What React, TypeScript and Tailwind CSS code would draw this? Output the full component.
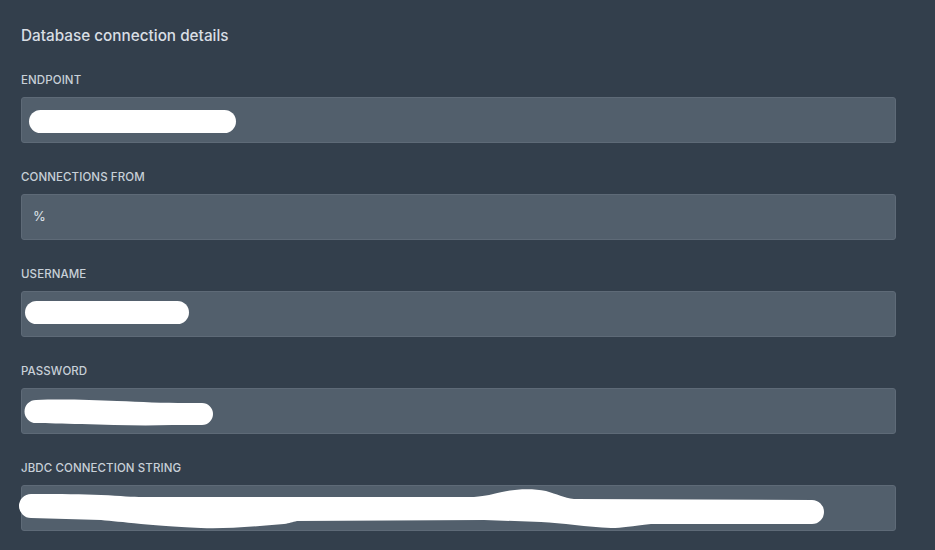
import React from "react"

// white marker strokes hiding the secret values, drawn in the field's own coordinates
function Redaction({ d }: { d: string }) {
    return (
        <svg className="absolute inset-0 overflow-visible" width="875" height="46" viewBox="0 0 875 46">
            <path d={d} fill="#ffffff" />
        </svg>
    )
}

const passwordBlob =
    "M14 11 C40 10 70 11 95 12 C120 13 140 14 165 14 L180 14 A11 11 0 0 1 180 36 L150 36 C120 37 90 36 60 35 C40 35 25 34 14 34 A11.5 11.5 0 0 1 14 11 Z"

const jdbcBlob =
    "M9 8 C40 8 60 8 79 9 C100 10 110 11 121 11 L452 11 C465 10 470 8 480 6 C492 3 510 2 524 5 C535 8 542 12 552 13 L790 14 A12 12 0 0 1 790 38 L629 38 C610 40 600 42 589 42 C565 41 540 37 519 36 L462 34 L275 35 C270 36 268 37 262 38 C230 41 200 43 179 42 C150 41 135 39 119 38 C100 36 90 35 79 34 L9 32 A12 12 0 0 1 9 8 Z"

interface FieldConfig {
    label: string
    value?: string
    blob?: "pill" | "path"
    pillLeft?: number
    pillTop?: number
    pillWidth?: number
    path?: string
}

const fields: FieldConfig[] = [
    { label: "ENDPOINT", blob: "pill", pillLeft: 7, pillTop: 12, pillWidth: 207 },
    { label: "CONNECTIONS FROM", value: "%" },
    { label: "USERNAME", blob: "pill", pillLeft: 3, pillTop: 9, pillWidth: 164 },
    { label: "PASSWORD", blob: "path", path: passwordBlob },
    { label: "JBDC CONNECTION STRING", blob: "path", path: jdbcBlob },
]

export default function App() {
    return (
        <div
            className="min-h-[550px] w-full bg-[#333f4c] pt-[26px] pl-[21px]"
            style={{ fontFamily: "Inter, 'Noto Sans', sans-serif" }}
        >
            <h2 className="text-[15.3px] leading-5 font-medium text-[#d9dee4]">Database connection details</h2>
            <div className="mt-[26px] flex w-[875px] flex-col gap-[26px]">
                {fields.map((field) => (
                    <div key={field.label} className="flex flex-col gap-[9px]">
                        <label className="text-[11.5px] leading-4 font-medium tracking-[0.1px] text-[#c8d0d8]">{field.label}</label>
                        <div className="relative flex h-[46px] items-center rounded-[3px] border border-[#5e6a77] bg-[#525f6c] px-[11px]">
                            {field.value && (
                                <span className="text-[13px] text-[#dfe4ea]">{field.value}</span>
                            )}
                            {field.blob === "pill" && (
                                <div
                                    className="absolute h-[23px] rounded-full bg-white"
                                    style={{ left: field.pillLeft, top: field.pillTop, width: field.pillWidth }}
                                />
                            )}
                            {field.blob === "path" && field.path && <Redaction d={field.path} />}
                        </div>
                    </div>
                ))}
            </div>
        </div>
    )
}
